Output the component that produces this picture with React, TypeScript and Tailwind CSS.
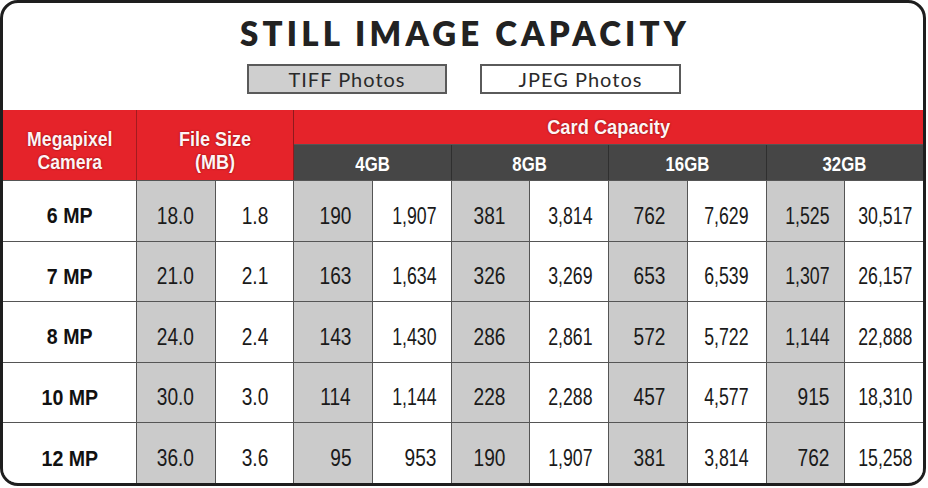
import React from "react";

const sizes = ["4GB", "8GB", "16GB", "32GB"];

const rows = [
  { mp: "6 MP", vals: ["18.0", "1.8", "190", "1,907", "381", "3,814", "762", "7,629", "1,525", "30,517"] },
  { mp: "7 MP", vals: ["21.0", "2.1", "163", "1,634", "326", "3,269", "653", "6,539", "1,307", "26,157"] },
  { mp: "8 MP", vals: ["24.0", "2.4", "143", "1,430", "286", "2,861", "572", "5,722", "1,144", "22,888"] },
  { mp: "10 MP", vals: ["30.0", "3.0", "114", "1,144", "228", "2,288", "457", "4,577", "915", "18,310"] },
  { mp: "12 MP", vals: ["36.0", "3.6", "95", "953", "190", "1,907", "381", "3,814", "762", "15,258"] },
];

// right padding per column so numbers line up like the printed chart
const pads = [
  "justify-center",
  "justify-center",
  "justify-end pr-[21px]",
  "justify-end pr-[14px]",
  "justify-end pr-[24px]",
  "justify-end pr-[16px]",
  "justify-end pr-[22px]",
  "justify-end pr-[17px]",
  "justify-end pr-[15px]",
  "justify-end pr-[11px]",
];

const font = "font-['Liberation_Sans',Arial,sans-serif]";
const redText = "text-[#fff4f4] [text-shadow:0_0_2px_rgba(110,0,0,0.9)]";

export default function App() {
  return (
    <div className="w-[928px] h-[488px] bg-white">
      <div className="w-[926px] h-[486px] border-[3px] border-[#1e1e1e] rounded-[18px] overflow-hidden flex flex-col bg-white">
        {/* title + legend */}
        <div className="h-[107px] flex flex-col items-center pt-[11px]">
          <h1 className="font-['Lato',sans-serif] font-extrabold text-[33px] leading-[38px] tracking-[4.2px] pl-[4px] text-[#222]">
            STILL IMAGE CAPACITY
          </h1>
          <div className="flex gap-[33px] mt-[12px] pl-[2px]">
            <div className="w-[200px] h-[30px] bg-[#cfcfcf] border-2 border-[#5a5a5a] flex items-center justify-center font-['Lato',sans-serif] text-[20px] tracking-[1px] text-[#2a2a2a]">
              TIFF Photos
            </div>
            <div className="w-[201px] h-[30px] bg-white border-2 border-[#5a5a5a] flex items-center justify-center font-['Lato',sans-serif] text-[20px] tracking-[1px] text-[#2a2a2a]">
              JPEG Photos
            </div>
          </div>
        </div>

        {/* table */}
        <div
          className={`flex-1 grid grid-cols-[133px_repeat(10,minmax(0,1fr))] grid-rows-[34px_35px_repeat(5,minmax(0,1fr))] gap-px bg-[#555] ${font}`}
        >
          <div
            className={`row-span-2 bg-[#e5232a] shadow-[1px_0_0_#a31b1f] flex items-center justify-center pt-[10px] font-bold text-[21px] leading-[23px] ${redText}`}
          >
            <div className="flex flex-col items-center scale-x-[0.84]">
              <span>Megapixel</span>
              <span>Camera</span>
            </div>
          </div>
          <div
            className={`row-span-2 col-span-2 bg-[#e5232a] shadow-[1px_0_0_#8e1a1d] flex items-center justify-center pt-[10px] font-bold text-[21px] leading-[23px] ${redText}`}
          >
            <div className="flex flex-col items-center scale-x-[0.86]">
              <span>File Size</span>
              <span>(MB)</span>
            </div>
          </div>
          <div
            className={`col-span-8 bg-[#e5232a] flex items-center justify-center font-bold text-[21px] ${redText}`}
          >
            <span className="inline-block scale-x-[0.87]">Card Capacity</span>
          </div>
          {sizes.map((s, i) => (
            <div
              key={s}
              className={`col-span-2 bg-[#464646] flex items-center justify-center pt-[3px] font-bold text-[21px] text-white ${
                i < 3 ? "shadow-[1px_0_0_#2f2f2f]" : ""
              }`}
            >
              <span className="inline-block scale-x-[0.8]">{s}</span>
            </div>
          ))}

          {rows.map((r) => (
            <React.Fragment key={r.mp}>
              <div className="bg-white flex items-center justify-center pt-[10px] font-bold text-[22px] text-[#111]">
                <span className="inline-block scale-x-[0.89]">{r.mp}</span>
              </div>
              {r.vals.map((v, j) => (
                <div
                  key={j}
                  className={`flex items-center pt-[10px] text-[23px] text-[#1a1a1a] ${pads[j]} ${
                    j % 2 === 0 ? "bg-[#cbcbcb]" : "bg-white"
                  }`}
                >
                  <span
                    className={`inline-block ${j < 2 ? "origin-center" : "origin-right"} ${
                      v.includes(",") ? "scale-x-[0.77]" : "scale-x-[0.83]"
                    }`}
                  >
                    {v}
                  </span>
                </div>
              ))}
            </React.Fragment>
          ))}
        </div>
      </div>
    </div>
  );
}
